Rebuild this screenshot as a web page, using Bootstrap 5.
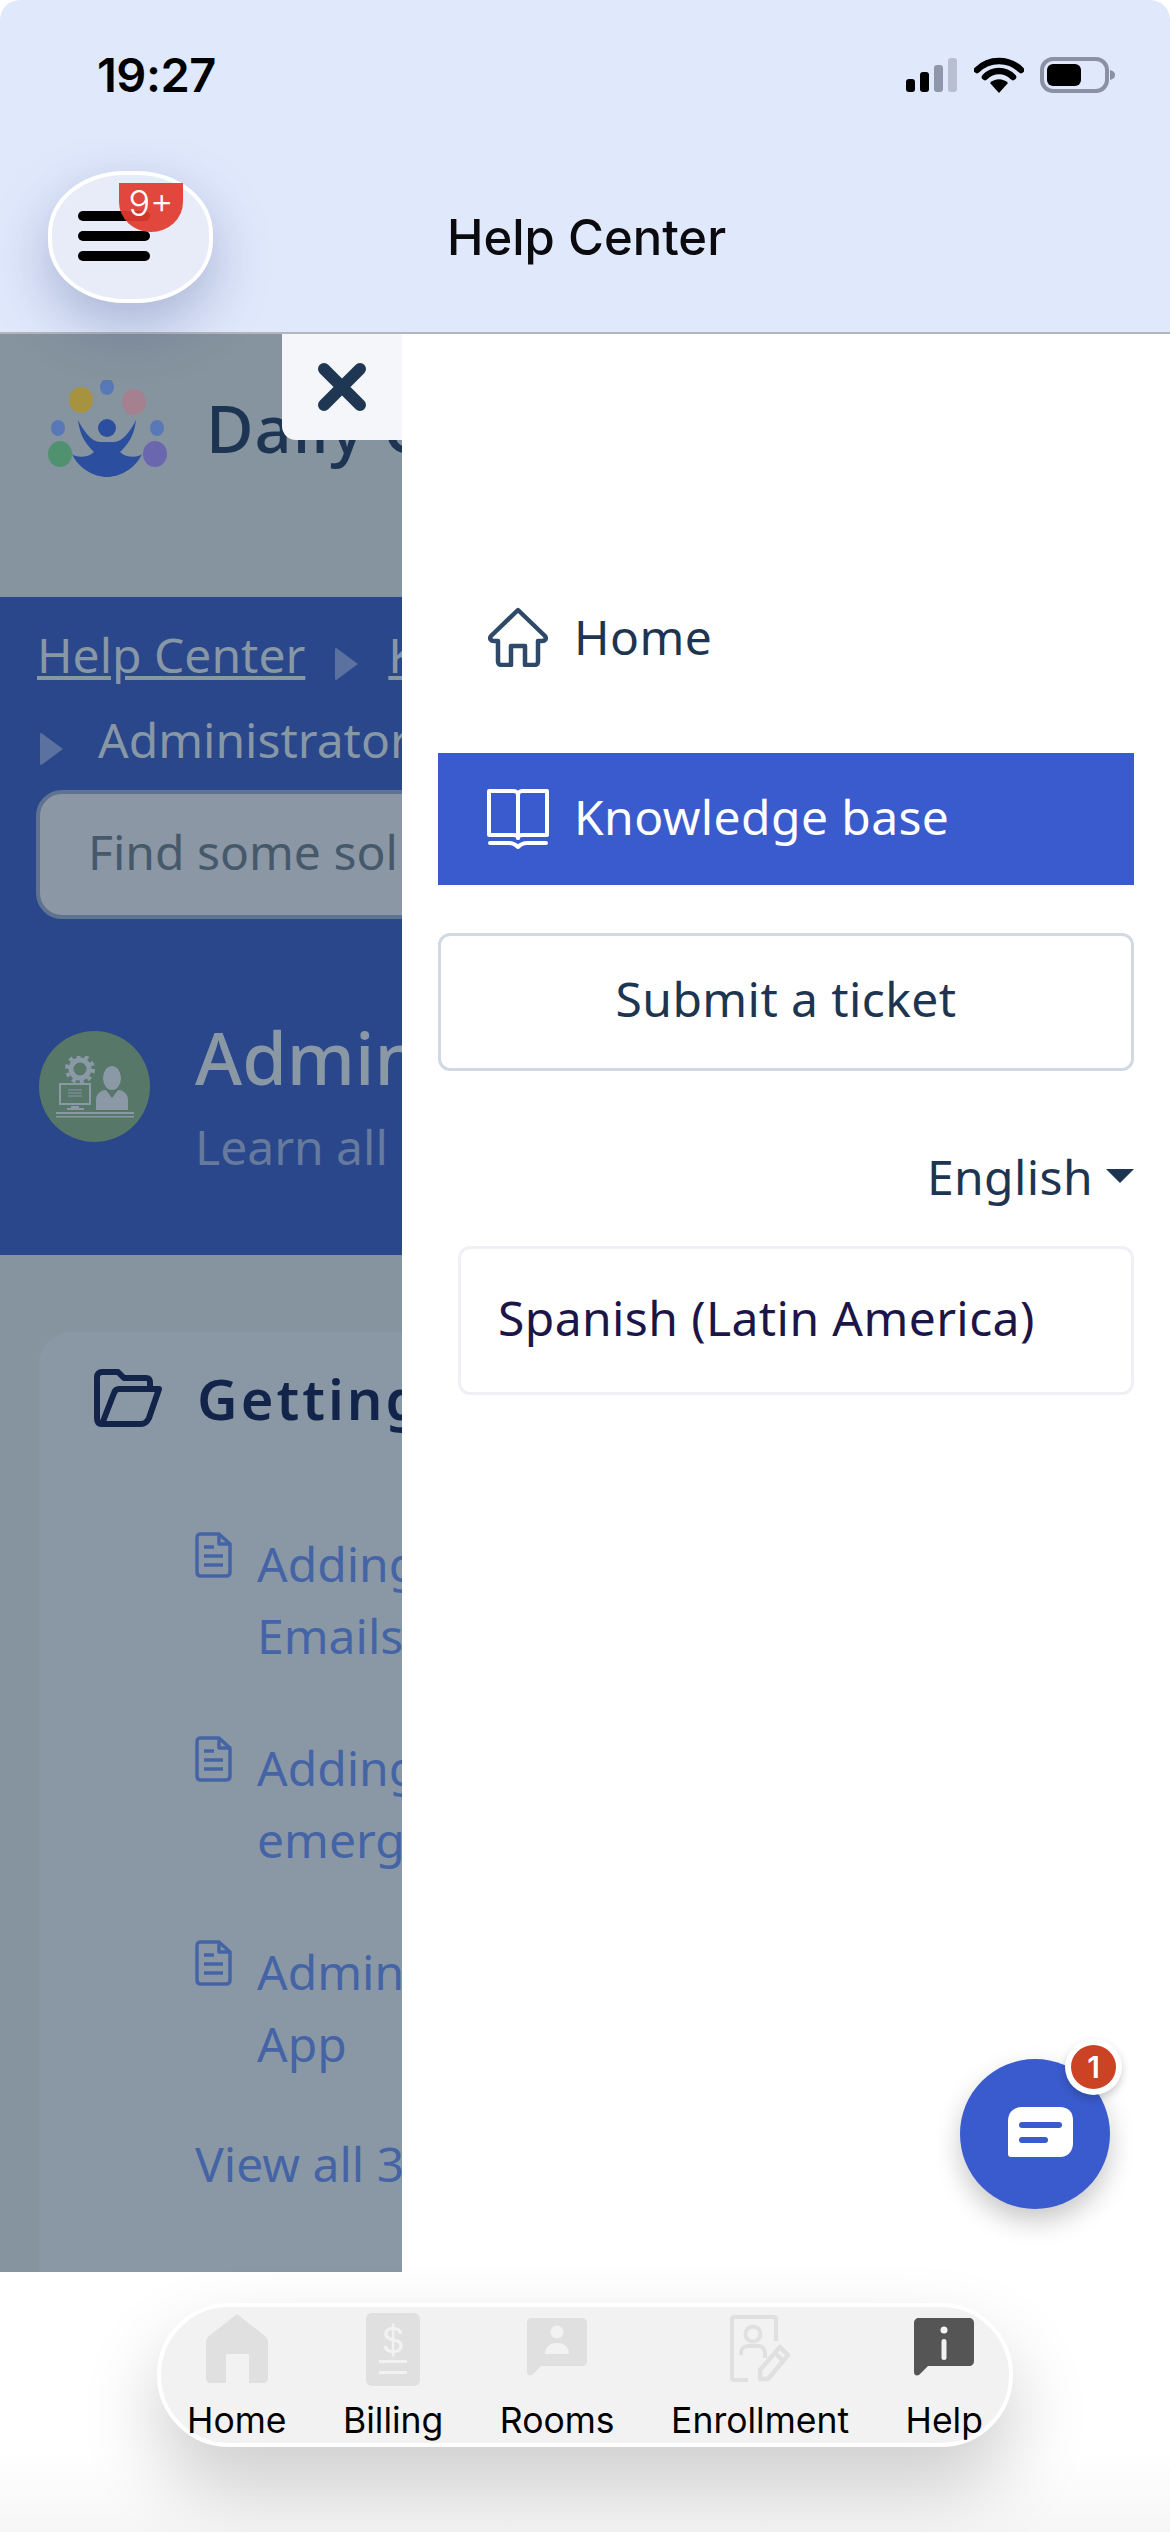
<!doctype html>
<html lang="en">
<head>
<meta charset="utf-8">
<title>Help Center</title>
<link href="https://cdn.jsdelivr.net/npm/bootstrap@5.3.0/dist/css/bootstrap.min.css" rel="stylesheet">
<style>
html,body{margin:0;background:#fff}
.screen{width:1170px;height:2532px;overflow:hidden;font-family:"Noto Sans",sans-serif;font-size:48px;color:#1e3551;background:#fff}
.screen svg{flex:none}
.top-head{height:334px;background:#e0e9fc;border-bottom:2px solid #b3b6bd;border-radius:20px 20px 0 0;z-index:3;flex:none}
.status-row{height:141px;padding:0 54px 0 97px;font-family:Inter,sans-serif}
.clock{font-size:47px;font-weight:600;color:#000;line-height:1;margin-top:8px;letter-spacing:-.5px}
.status-icons{margin-top:8px;gap:16px}
.title-row{height:191px;clip-path:inset(0 0 -90px 0)}
.menu-btn{position:absolute;left:48px;top:30px;width:165px;height:132px;border:4px solid #fff;border-radius:76px/62px;background:#e7ecf8;box-shadow:0 22px 60px rgba(50,62,125,.32);padding:0}
.menu-lines{position:absolute;left:26px;top:36px;width:72px;gap:10px}
.menu-lines span{height:10px;border-radius:5px;background:#000}
.menu-count{position:absolute;left:67px;top:8px;width:64px;height:49px;background:rgba(224,58,46,.93);border-radius:0 0 32px 32px/0 0 30px 30px;color:#fff;font-size:36px;line-height:40px;text-align:center;font-family:Inter,sans-serif;font-weight:300}
.page-title{margin-left:447px;margin-top:2px;font-family:Inter,sans-serif;font-weight:500;font-size:49px;color:#0b0b0f;line-height:60px;white-space:nowrap}
.body-row{height:1938px;flex:none}
.under-page{width:402px;background:#86949f;overflow:hidden;white-space:nowrap;flex:none}
.brand-row{height:263px;padding-left:48px;padding-top:46px;gap:38px;align-items:flex-start}
.brand-name{font-size:65px;line-height:88px;color:#1d3552;font-weight:500;margin-top:4px;letter-spacing:1px}
.band{height:658px;background:#29478a;padding:18px 0 0 37px;color:#8797a6}
.crumb{height:80px;gap:30px;line-height:68px}
.crumb a{color:#8797a6}
.crumb-tri{width:0;height:0;border-left:23px solid #5b719f;border-top:17px solid transparent;border-bottom:17px solid transparent;border-radius:3px;flex:none;margin-top:18px}
.crumb-two{height:78px;padding-left:3px;gap:35px;margin-top:6px}
.find-box{width:500px;height:129px;border:4px solid #5f7391;border-radius:26px;background:#8b97a4;color:#46596b;padding-left:48px;line-height:116px;margin-top:11px;margin-left:-1px}
.topic-row{margin-top:112px;gap:45px;margin-left:2px}
.topic-ico{width:111px;height:111px;flex:none;background:#577768;border-radius:50%}
.topic-name{font-size:72px;line-height:80px;color:#8a98a6;font-weight:500;margin-top:-14px}
.topic-sub{color:#667a9d;line-height:64px;margin-top:18px}
.sheet{margin:77px 0 0 39px;width:500px;height:940px;background:#8a98a5;border-radius:32px 0 0 0;padding:30px 0 0 55px}
.sheet-head{gap:35px;font-size:56px;font-weight:600;color:#13244a;line-height:72px;letter-spacing:3px}
.doc-list{margin:94px 0 0 101px;gap:60px}
.doc-item{gap:25px;color:#4464a6;line-height:72px}
.doc-item svg{margin-top:4px}
.view-all{color:#4464a6;line-height:72px;margin:48px 0 0 101px}
.side-sheet{width:768px;flex:none;padding:237px 36px 0;background:#fff;gap:0;letter-spacing:.4px}
.side-link{height:132px;padding-left:49px;gap:25px;color:#1e3551;text-decoration:none}
.side-link.on{background:#3a5bcd;color:#fff;margin-top:50px}
.side-link.on span{margin-top:-5px}
.ticket-btn{height:138px;margin-top:48px;border:3px solid #d3d9e3;border-radius:12px;font-size:48px;color:#1e3551;font-family:inherit;letter-spacing:inherit;padding:0 0 6px}
.lang-toggle{margin-top:70px;line-height:72px;text-align:right;color:#1e3551}
.lang-toggle.dropdown-toggle::after{margin-left:13px}
.lang-menu{margin:33px 0 0 20px;height:149px;border:3px solid #eef0f5;border-radius:12px;padding-left:37px;color:#1c1648;line-height:137px}
.close-x{position:absolute;left:282px;top:0;width:120px;height:106px;background:#f4f6f9;border-radius:0 0 0 14px;padding:0;border:0}
.chat-fab{position:absolute;left:960px;top:1725px;width:150px;height:150px;border-radius:50%;background:#3a5bcd;box-shadow:0 12px 26px rgba(0,0,0,.22);border:0;padding:0}
.chat-fab svg{margin-left:12px;margin-top:-2px}
.chat-count{position:absolute;left:105px;top:-20px;width:57px;height:56px;border-radius:50%;background:#cb4224;border:6px solid #fff;color:#fff;font-family:Inter,sans-serif;font-size:30px;font-weight:600;line-height:44px;text-align:center;box-shadow:0 4px 8px rgba(0,0,0,.2)}
.foot-area{height:260px;flex:none;z-index:2;background:linear-gradient(#fff 0,#fff 70%,#f6f6f6 100%)}
.tab-bar{position:relative;left:157px;top:31px;width:856px;height:144px;background:#f2f2f2;border:4px solid #fff;border-radius:72px;box-shadow:0 40px 80px rgba(0,0,0,.2);padding:5px 0 0 26px;gap:56.5px;font-family:Inter,sans-serif;font-size:35.5px;color:#000;white-space:nowrap}
.tab-item{line-height:46px}
.tab-ico{height:76px;margin-bottom:10px}
</style>
</head>
<body>
<div class="screen d-flex flex-column position-relative">

  <header class="top-head position-relative">
    <div class="status-row d-flex justify-content-between align-items-center">
      <div class="clock">19:27</div>
      <div class="status-icons d-flex align-items-center">
        <svg width="52" height="34" viewBox="0 0 52 34"><rect x="0" y="21" width="9" height="13" rx="3" fill="#000"/><rect x="14" y="14" width="9" height="20" rx="3" fill="#000"/><rect x="28" y="7" width="9" height="27" rx="3" fill="#8f97a8"/><rect x="42" y="0" width="9" height="34" rx="3" fill="#b8bfd0"/></svg>
        <svg width="50" height="36" viewBox="0 0 50 36"><path d="M3 13C15 1 35 1 47 13" fill="none" stroke="#000" stroke-width="6.5" stroke-linecap="round"/><path d="M11 20C19 12 31 12 39 20" fill="none" stroke="#000" stroke-width="6.5" stroke-linecap="round"/><path d="M25 36L16 26C21 21 29 21 34 26Z" fill="#000"/></svg>
        <svg width="76" height="36" viewBox="0 0 76 36"><rect x="2" y="2" width="65" height="32" rx="11" fill="none" stroke="#8a91a3" stroke-width="4"/><rect x="7" y="7" width="34" height="22" rx="6" fill="#000"/><path d="M70 13c4 1 5 3 5 5s-1 4-5 5z" fill="#8a91a3"/></svg>
      </div>
    </div>
    <div class="title-row position-relative d-flex align-items-center">
      <button class="menu-btn" type="button" aria-label="Menu">
        <span class="menu-lines d-flex flex-column"><span></span><span></span><span></span></span>
        <span class="menu-count">9+</span>
      </button>
      <div class="page-title">Help Center</div>
    </div>
  </header>

  <main class="body-row d-flex position-relative">
    <section class="under-page">
      <div class="brand-row d-flex">
        <svg width="120" height="98" viewBox="0 0 120 98">
          <ellipse cx="59" cy="7" rx="7" ry="8" fill="#5878b8"/><ellipse cx="33" cy="20" rx="12" ry="13" fill="#a6923f"/><ellipse cx="86" cy="22" rx="12" ry="13" fill="#a5808f"/>
          <ellipse cx="10" cy="48" rx="7" ry="8" fill="#5878b8"/><ellipse cx="109" cy="48" rx="7" ry="8" fill="#5878b8"/>
          <ellipse cx="12" cy="74" rx="12" ry="13" fill="#50916f"/><ellipse cx="107" cy="74" rx="12" ry="13" fill="#6a67ae"/>
          <ellipse cx="59" cy="48" rx="9" ry="9" fill="#2b4f9e"/>
          <path d="M30 40C36 52 44 62 52 62H66C74 62 82 52 88 40C86 58 78 66 72 72C78 78 90 78 94 74C88 88 72 97 59 97C46 97 30 88 24 74C28 78 40 78 46 72C40 66 32 58 30 40Z" fill="#2b4f9e"/>
        </svg>
        <div class="brand-name">Daily C</div>
      </div>
      <div class="band">
        <div class="crumb d-flex align-items-center"><a href="#">Help Center</a><span class="crumb-tri"></span><a href="#">K</a></div>
        <div class="crumb-two d-flex align-items-center"><span class="crumb-tri"></span><span>Administrator</span></div>
        <div class="find-box">Find some sol</div>
        <div class="topic-row d-flex">
          <div class="topic-ico d-flex align-items-center justify-content-center">
            <svg width="78" height="62" viewBox="0 0 78 62" fill="#8b98a5">
              <circle cx="24" cy="13" r="9" fill="none" stroke="#8b98a5" stroke-width="5"/>
              <circle cx="24" cy="13" r="13" fill="none" stroke="#8b98a5" stroke-width="4" stroke-dasharray="4 4.2"/>
              <rect x="4" y="28" width="30" height="20" fill="none" stroke="#8b98a5" stroke-width="2"/>
              <path d="M12 34h14M12 37h14M12 40h14" stroke="#8b98a5" stroke-width="1"/>
              <path d="M15 50h8v2h5v2H11v-2h4z"/>
              <ellipse cx="56" cy="22" rx="9" ry="12"/>
              <path d="M40 54V44c0-7 6-10 10-10l6 8 6-8c4 0 10 3 10 10v10z"/>
              <rect x="0" y="56" width="78" height="2"/><rect x="0" y="60" width="78" height="1.5"/>
            </svg>
          </div>
          <div>
            <div class="topic-name">Admin</div>
            <div class="topic-sub">Learn all</div>
          </div>
        </div>
      </div>
      <div class="sheet">
        <div class="sheet-head d-flex align-items-center">
          <svg width="68" height="58" viewBox="0 0 68 58" fill="none" stroke="#13244a" stroke-width="6" stroke-linejoin="round"><path d="M8 55C4 55 3 53 3 49V8C3 5 5 3 8 3H24L30 9H52C55 9 56 11 56 14V19"/><path d="M8 55L20 24C21 21 23 20 25 20H65L55 49C53 53 51 55 47 55Z"/></svg>
          <span>Getting</span>
        </div>
        <div class="doc-list d-flex flex-column">
          <div class="doc-item d-flex">
            <svg width="37" height="46" viewBox="0 0 37 46" fill="none" stroke="#4464a6" stroke-width="3.5" stroke-linejoin="round"><path d="M6 2H24L35 12V40C35 43 33 44 31 44H6C3 44 2 42 2 40V6C2 3 3 2 6 2Z"/><path d="M24 2V12H35M9 15H19M9 24H28M9 33H28"/></svg>
            <div>Adding<br>Emails</div>
          </div>
          <div class="doc-item d-flex">
            <svg width="37" height="46" viewBox="0 0 37 46" fill="none" stroke="#4464a6" stroke-width="3.5" stroke-linejoin="round"><path d="M6 2H24L35 12V40C35 43 33 44 31 44H6C3 44 2 42 2 40V6C2 3 3 2 6 2Z"/><path d="M24 2V12H35M9 15H19M9 24H28M9 33H28"/></svg>
            <div>Adding<br>emerg</div>
          </div>
          <div class="doc-item d-flex">
            <svg width="37" height="46" viewBox="0 0 37 46" fill="none" stroke="#4464a6" stroke-width="3.5" stroke-linejoin="round"><path d="M6 2H24L35 12V40C35 43 33 44 31 44H6C3 44 2 42 2 40V6C2 3 3 2 6 2Z"/><path d="M24 2V12H35M9 15H19M9 24H28M9 33H28"/></svg>
            <div>Admin<br>App</div>
          </div>
        </div>
        <div class="view-all">View all 3</div>
      </div>
    </section>

    <aside class="side-sheet d-flex flex-column">
      <a class="side-link d-flex align-items-center" href="#">
        <svg width="62" height="60" viewBox="0 0 62 60" fill="none" stroke="#2f4a68" stroke-width="4.5" stroke-linejoin="round"><path d="M31 3L58 29C60 32 58 34 55 34H51V54C51 57 50 58 47 58H38V39H24V58H15C12 58 11 57 11 54V34H7C4 34 2 32 4 29Z"/></svg>
        <span>Home</span>
      </a>
      <a class="side-link on d-flex align-items-center" href="#">
        <svg width="62" height="60" viewBox="0 0 62 60" fill="none" stroke="#fff" stroke-width="4" stroke-linejoin="round" stroke-linecap="round"><path d="M2 2H27C29 2 31 4 31 6C31 4 33 2 35 2H60V46H36C33 46 31 47 31 49C31 47 29 46 26 46H2Z"/><path d="M31 6V49"/><path d="M3 54H22C26 54 29 56 31 58C33 56 36 54 40 54H59"/></svg>
        <span>Knowledge base</span>
      </a>
      <button class="btn ticket-btn" type="button">Submit a ticket</button>
      <div class="lang-toggle dropdown-toggle">English</div>
      <div class="lang-menu">Spanish (Latin America)</div>
    </aside>

    <button class="close-x d-flex align-items-center justify-content-center" type="button" aria-label="Close">
      <svg width="48" height="48" viewBox="0 0 48 48"><path d="M6 6L42 42M42 6L6 42" stroke="#1f3753" stroke-width="12" stroke-linecap="round"/></svg>
    </button>

    <button class="chat-fab d-flex align-items-center justify-content-center" type="button" aria-label="Chat">
      <svg width="66" height="52" viewBox="0 0 66 52"><path d="M14 0H52C60 0 65 5 65 13V36C65 44 60 50 52 50H3C1 50 0 49 0 47V14C0 5 6 0 14 0Z" fill="#fff"/><rect x="11" y="15" width="43" height="6" rx="3" fill="#3a5bcd"/><rect x="11" y="30" width="29" height="6" rx="3" fill="#3a5bcd"/></svg>
      <span class="chat-count">1</span>
    </button>
  </main>

  <footer class="foot-area position-relative">
    <nav class="tab-bar d-flex">
      <div class="tab-item d-flex flex-column align-items-center">
        <svg class="tab-ico" width="64" height="76" viewBox="0 0 64 76"><path d="M32 2L60 24C62 26 63 27 63 30V66C63 69 61 71 58 71H44V42H21V71H6C3 71 1 69 1 66V30C1 27 2 26 4 24Z" fill="#e0e0e0"/></svg>
        <span>Home</span>
      </div>
      <div class="tab-item d-flex flex-column align-items-center">
        <svg class="tab-ico" width="54" height="76" viewBox="0 0 54 76"><rect x="0" y="1" width="54" height="73" rx="6" fill="#e0e0e0"/><text x="27" y="41" text-anchor="middle" font-family="Inter,sans-serif" font-size="36" fill="#f2f2f2">$</text><path d="M13 49.5H41M13 60.500H41" stroke="#f2f2f2" stroke-width="3"/></svg>
        <span>Billing</span>
      </div>
      <div class="tab-item d-flex flex-column align-items-center">
        <svg class="tab-ico" width="60" height="76" viewBox="0 0 60 76"><path d="M5 6H55C58 6 60 8 60 11V49C60 52 58 54 55 54H14L5 63C2 64 0 63 0 60V11C0 8 2 6 5 6Z" fill="#e0e0e0"/><circle cx="30" cy="20" r="6.500" fill="#f2f2f2"/><path d="M18 42C18 34 24 31 30 31S42 34 42 42Z" fill="#f2f2f2"/></svg>
        <span>Rooms</span>
      </div>
      <div class="tab-item d-flex flex-column align-items-center">
        <svg class="tab-ico" width="60" height="76" viewBox="0 0 60 76" fill="none" stroke="#e0e0e0" stroke-width="4" stroke-linejoin="round"><path d="M18 68H4C2.500 68 2 67 2 66V8C2 6 2.500 5 4 5H44C45 5 46 6 46 8V29"/><circle cx="23" cy="22" r="7.500"/><path d="M11 43V41C11 37 14 34 18 34H28C32 34 35 37 35 41V46"/><path d="M30 58L50 35L58 43L38 67H30ZM45 41L53 49" stroke-width="4.500"/></svg>
        <span>Enrollment</span>
      </div>
      <div class="tab-item d-flex flex-column align-items-center">
        <svg class="tab-ico" width="60" height="76" viewBox="0 0 60 76"><path d="M5 6H55C58 6 60 8 60 11V49C60 52 58 54 55 54H14L5 63C2 64 0 63 0 60V11C0 8 2 6 5 6Z" fill="#555"/><circle cx="30" cy="18" r="3.500" fill="#f2f2f2"/><rect x="27.500" y="27" width="5" height="21" rx="2.500" fill="#f2f2f2"/></svg>
        <span>Help</span>
      </div>
    </nav>
  </footer>
</div>
<script src="https://cdn.jsdelivr.net/npm/bootstrap@5.3.0/dist/js/bootstrap.bundle.min.js"></script>
</body>
</html>
